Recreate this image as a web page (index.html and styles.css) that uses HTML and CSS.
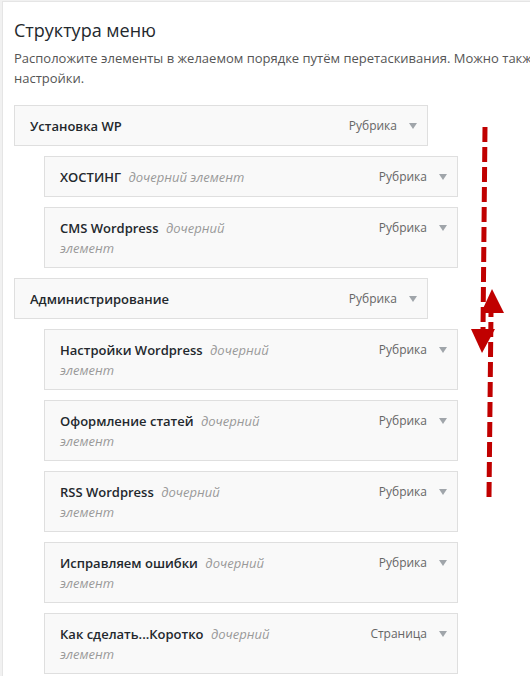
FILE: index.html
```html
<!DOCTYPE html>
<html lang="ru">
<head>
    <meta charset="UTF-8">
    <meta name="viewport" content="width=device-width, initial-scale=1.0">
    <title>Структура меню</title>
    <link rel="stylesheet" href="styles.css">
</head>
<body>
    <div class="panel">
        <h3 class="panel-title">Структура меню</h3>
        <p class="desc">Расположите элементы в желаемом порядке путём перетаскивания. Можно также щёлкнуть на стрелке справа от элемента, чтобы открыть дополнительные<br>настройки.</p>

        <ul class="menu">
            <li class="item">
                <div class="handle">
                    <span class="item-title"><span class="name">Установка WP</span></span>
                    <span class="controls"><span class="type">Рубрика</span><span class="toggle"></span></span>
                </div>
            </li>
            <li class="item sub">
                <div class="handle">
                    <span class="item-title"><span class="name">ХОСТИНГ</span> <span class="is-sub">дочерний элемент</span></span>
                    <span class="controls"><span class="type">Рубрика</span><span class="toggle"></span></span>
                </div>
            </li>
            <li class="item sub">
                <div class="handle">
                    <span class="item-title"><span class="name">CMS Wordpress</span> <span class="is-sub">дочерний элемент</span></span>
                    <span class="controls"><span class="type">Рубрика</span><span class="toggle"></span></span>
                </div>
            </li>
            <li class="item">
                <div class="handle">
                    <span class="item-title"><span class="name">Администрирование</span></span>
                    <span class="controls"><span class="type">Рубрика</span><span class="toggle"></span></span>
                </div>
            </li>
            <li class="item sub">
                <div class="handle">
                    <span class="item-title"><span class="name">Настройки Wordpress</span> <span class="is-sub">дочерний элемент</span></span>
                    <span class="controls"><span class="type">Рубрика</span><span class="toggle"></span></span>
                </div>
            </li>
            <li class="item sub">
                <div class="handle">
                    <span class="item-title"><span class="name">Оформление статей</span> <span class="is-sub">дочерний элемент</span></span>
                    <span class="controls"><span class="type">Рубрика</span><span class="toggle"></span></span>
                </div>
            </li>
            <li class="item sub">
                <div class="handle">
                    <span class="item-title"><span class="name">RSS Wordpress</span> <span class="is-sub">дочерний элемент</span></span>
                    <span class="controls"><span class="type">Рубрика</span><span class="toggle"></span></span>
                </div>
            </li>
            <li class="item sub">
                <div class="handle">
                    <span class="item-title"><span class="name">Исправляем ошибки</span> <span class="is-sub">дочерний элемент</span></span>
                    <span class="controls"><span class="type">Рубрика</span><span class="toggle"></span></span>
                </div>
            </li>
            <li class="item sub">
                <div class="handle">
                    <span class="item-title"><span class="name">Как сделать...Коротко</span> <span class="is-sub">дочерний элемент</span></span>
                    <span class="controls"><span class="type">Страница</span><span class="toggle"></span></span>
                </div>
            </li>
        </ul>
    </div>

    <!-- стрелки перетаскивания поверх списка -->
    <svg class="arrows" width="530" height="676" viewBox="0 0 530 676">
        <g fill="none" stroke="#c00000" stroke-width="5" stroke-dasharray="15 5">
            <line x1="485" y1="127" x2="483" y2="330"/>
            <line x1="489" y1="497" x2="491" y2="313"/>
        </g>
        <g fill="#c00000">
            <polygon points="471,329 495,329 482,353"/>
            <polygon points="481,313 504,313 492,289"/>
        </g>
    </svg>
</body>
</html>
```

FILE: styles.css
```css
html, body {
    margin: 0;
    padding: 0;
}
body {
    background-color: #f1f1f1;
    font-family: "Open Sans", "Liberation Sans", sans-serif;
    font-size: 13px;
    color: #444;
    position: relative;
    overflow: hidden;
    height: 676px;
}
.panel {
    margin: 1px 0 0 2px;
    border-top: 1px solid #e5e5e5;
    border-left: 1px solid #e5e5e5;
    background-color: #fff;
    padding: 0 0 0 11px;
    min-height: 700px;
}
.panel-title {
    margin: 16px 0 0;
    font-size: 18px;
    line-height: 24px;
    font-weight: 400;
    color: #23282d;
}
.desc {
    margin: 6px 0 17px;
    line-height: 20px;
    color: #555;
    white-space: nowrap;
}
.menu {
    list-style: none;
    margin: 0;
    padding: 0;
}
.item {
    width: 414px;
    margin-bottom: 10px;
}
.item.sub {
    margin-left: 30px;
}
.handle {
    display: flex;
    align-items: flex-start;
    box-sizing: border-box;
    border: 1px solid #dfdfdf;
    background-color: #f9f9f9;
    padding: 10px 10px 9px 15px;
    line-height: 20px;
}
.item-title {
    flex: 0 0 210px;
}
.name {
    font-weight: 600;
    color: #23282d;
}
.is-sub {
    margin-left: 4px;
    font-style: italic;
    color: #999;
}
.controls {
    margin-left: auto;
    display: flex;
    align-items: center;
    height: 20px;
}
.type {
    font-size: 12px;
    color: #666;
}
.toggle {
    width: 0;
    height: 0;
    margin-left: 12px;
    border-left: 4px solid transparent;
    border-right: 4px solid transparent;
    border-top: 6px solid #a0a5aa;
}
.arrows {
    position: absolute;
    top: 0;
    left: 0;
    pointer-events: none;
}
```
